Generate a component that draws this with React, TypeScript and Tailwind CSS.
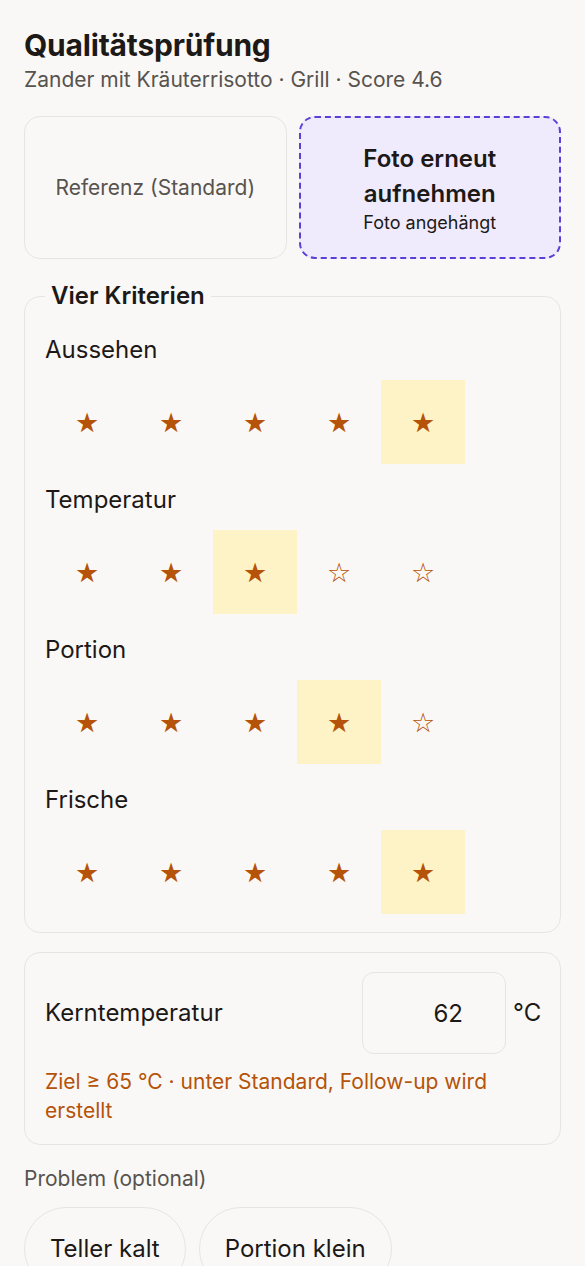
import React from "react";

const criteria = [
  { name: "Aussehen", value: 5 },
  { name: "Temperatur", value: 3 },
  { name: "Portion", value: 4 },
  { name: "Frische", value: 5 },
];

function StarRow({ value }: { value: number }) {
  return (
    <div className="flex">
      {[1, 2, 3, 4, 5].map((i) => (
        <div
          key={i}
          className={
            "w-[84px] h-[84px] flex items-center justify-center text-[27px] leading-none text-[#b45309] " +
            (i === value ? "bg-[#fef3c7]" : "")
          }
          style={{ fontFamily: '"DejaVu Sans", sans-serif' }}
        >
          {i <= value ? "★" : "☆"}
        </div>
      ))}
    </div>
  );
}

export default function App() {
  return (
    <div
      className="min-h-[1266px] bg-[#faf8f6] px-6 pt-[27px] text-[#1c1917]"
      style={{ fontFamily: 'Inter, "Noto Sans", sans-serif' }}
    >
      <h1 className="text-[30px] leading-[36px] font-bold tracking-[-0.2px]">Qualitätsprüfung</h1>
      <p className="text-[21px] leading-[30px] text-[#57534e] mt-[2px]">
        Zander mit Kräuterrisotto · Grill · Score 4.6
      </p>

      <div className="grid grid-cols-2 gap-3 mt-[21px]">
        <div className="h-[143px] rounded-2xl border border-[#e7e5e4] flex items-center justify-center text-[21px] text-[#57534e]">
          Referenz (Standard)
        </div>
        <div className="h-[143px] rounded-2xl border-2 border-dashed border-[#5b3fd6] bg-[#efebfd] flex flex-col items-center justify-center text-center">
          <div className="text-[24px] leading-[35px] font-semibold">
            Foto erneut
            <br />
            aufnehmen
          </div>
          <div className="text-[18px] leading-[24px]">Foto angehängt</div>
        </div>
      </div>

      <fieldset className="mt-[22px] rounded-2xl border border-[#e7e5e4] px-5 pb-[18px]">
        <legend className="px-1.5 text-[24px] leading-[30px] font-semibold">Vier Kriterien</legend>
        <div className="flex flex-col gap-[22px] mt-[25px]">
          {criteria.map((c) => (
            <div key={c.name} className="flex flex-col gap-[16px]">
              <div className="text-[24px] leading-[28px]">{c.name}</div>
              <StarRow value={c.value} />
            </div>
          ))}
        </div>
      </fieldset>

      <div className="mt-[19px] rounded-2xl border border-[#e7e5e4] px-5 pt-[19px] pb-[19px]">
        <div className="flex items-center">
          <div className="flex-1 text-[24px]">Kerntemperatur</div>
          <input
            readOnly
            value="62"
            className="w-[144px] h-[82px] rounded-xl border border-[#e7e5e4] bg-transparent text-right pr-[42px] text-[24px] outline-none"
          />
          <div className="ml-[7px] w-[27px] text-[24px]">°C</div>
        </div>
        <p className="mt-[13px] text-[21px] leading-[29px] text-[#b45309]">
          Ziel ≥ 65 °C · unter Standard, Follow-up wird erstellt
        </p>
      </div>

      <div className="mt-[20px] text-[21px] leading-[28px] text-[#57534e]">Problem (optional)</div>
      <div className="flex gap-[13px] mt-[14px]">
        <button className="h-[84px] rounded-full border border-[#e7e5e4] px-[25px] text-[24px]">Teller kalt</button>
        <button className="h-[84px] rounded-full border border-[#e7e5e4] px-[25px] text-[24px]">Portion klein</button>
      </div>
    </div>
  );
}
